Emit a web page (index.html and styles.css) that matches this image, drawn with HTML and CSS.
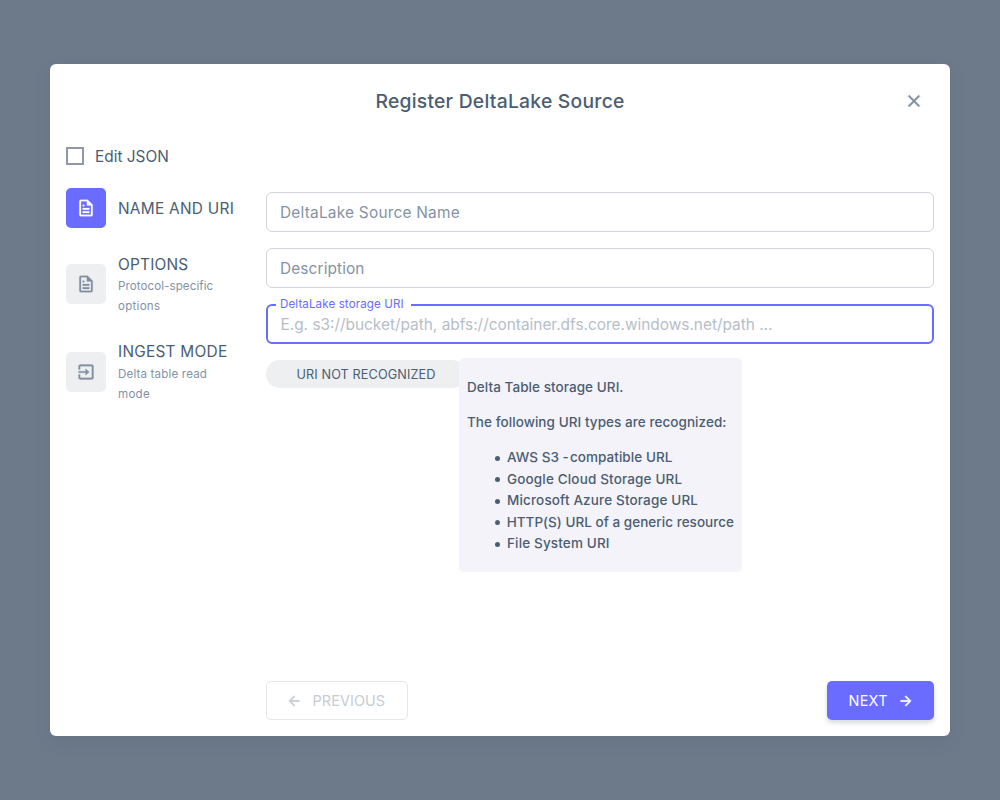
FILE: index.html
```
<!DOCTYPE html>
<html lang="en">
<head>
<meta charset="utf-8">
<title>Register DeltaLake Source</title>
<link rel="stylesheet" href="styles.css">
</head>
<body>
<div class="dialog" role="dialog">
  <header class="header">
    <h1 class="title">Register DeltaLake Source</h1>
    <svg class="close" viewBox="0 0 24 24"><path d="M19 6.41 17.59 5 12 10.59 6.41 5 5 6.41 10.59 12 5 17.59 6.41 19 12 13.41 17.59 19 19 17.59 13.41 12z"/></svg>
  </header>
  <label class="json"><span class="checkbox"></span><span class="json-label">Edit JSON</span></label>
  <div class="content">
    <nav class="steps">
      <div class="step active">
        <span class="tile"><svg viewBox="0 0 24 24"><path d="M6 2a2 2 0 0 0-2 2v16a2 2 0 0 0 2 2h12a2 2 0 0 0 2-2V8l-6-6H6m0 2h7v5h5v11H6V4m2 4v2h2V8H8m0 4v2h8v-2H8m0 4v2h8v-2H8z"/></svg></span>
        <div class="step-text"><div class="step-title t-name">NAME AND URI</div></div>
      </div>
      <div class="step">
        <span class="tile"><svg viewBox="0 0 24 24"><path d="M6 2a2 2 0 0 0-2 2v16a2 2 0 0 0 2 2h12a2 2 0 0 0 2-2V8l-6-6H6m0 2h7v5h5v11H6V4m2 4v2h2V8H8m0 4v2h8v-2H8m0 4v2h8v-2H8z"/></svg></span>
        <div class="step-text"><div class="step-title t-options">OPTIONS</div><div class="step-sub"><span class="s-protocol">Protocol-specific</span><br>options</div></div>
      </div>
      <div class="step">
        <span class="tile"><svg viewBox="0 0 24 24"><path d="M19 3H5a2 2 0 0 0-2 2v4h2V5h14v14H5v-4H3v4a2 2 0 0 0 2 2h14a2 2 0 0 0 2-2V5a2 2 0 0 0-2-2m-7.500 5v3H3v2h8.500v3l4.500-4z"/></svg></span>
        <div class="step-text"><div class="step-title t-ingest">INGEST MODE</div><div class="step-sub"><span class="s-delta">Delta table read</span><br>mode</div></div>
      </div>
    </nav>
    <main class="form">
      <div class="field"><span class="f-name">DeltaLake Source Name</span></div>
      <div class="field"><span class="f-desc">Description</span></div>
      <div class="field focused"><span class="float">DeltaLake storage URI</span><span class="f-uri">E.g. s3://bucket/path, abfs://container.dfs.core.windows.net/path ...</span></div>
      <div class="chip-row">
        <div class="chip"><span>URI NOT RECOGNIZED</span></div>
        <div class="tooltip">
          <p class="p1">Delta Table storage URI.</p>
          <p class="p2">The following URI types are recognized:</p>
          <ul>
            <li class="l1"><span>AWS S3<span class="dash"> -</span>compatible URL</span></li>
            <li class="l2"><span>Google Cloud Storage URL</span></li>
            <li class="l3"><span>Microsoft Azure Storage URL</span></li>
            <li class="l4"><span>HTTP(S) URL of a generic resource</span></li>
            <li class="l5"><span>File System URI</span></li>
          </ul>
        </div>
      </div>
      <footer class="actions">
        <button class="btn prev" disabled><svg viewBox="0 0 24 24"><path d="M20 11v2H8l5.500 5.500-1.420 1.420L4.160 12l7.920-7.920L13.500 5.500 8 11h12z"/></svg><span>PREVIOUS</span></button>
        <button class="btn next"><span>NEXT</span><svg viewBox="0 0 24 24"><path d="M4 11v2h12l-5.500 5.500 1.420 1.420L19.840 12l-7.920-7.920L10.500 5.500 16 11H4z"/></svg></button>
      </footer>
    </main>
  </div>
</div>
</body>
</html>
```
FILE: styles.css
```
* { box-sizing: border-box; }
body {
  margin: 0;
  height: 800px;
  display: flex;
  align-items: center;
  justify-content: center;
  background: #6d7a8a;
  color: #4b5d72;
  font: 15.400px/24px Inter, "Liberation Sans", sans-serif;
  white-space: nowrap;
}
svg { fill: currentColor; display: block; flex: none; }
.dialog {
  width: 900px;
  height: 672px;
  padding: 16px;
  display: flex;
  flex-direction: column;
  background: #fff;
  border-radius: 6px;
  box-shadow: 0 6px 16px rgba(50, 71, 92, .12);
}
.header {
  display: grid;
  grid-template-columns: 46px 1fr 46px;
  align-items: center;
  height: 40px;
}
.title {
  grid-column: 2;
  margin: 0;
  padding-top: 1px;
  text-align: center;
  font-size: 19.300px;
  font-weight: 500;
  line-height: 32px;
  letter-spacing: .25px;
}
.close {
  width: 20px;
  height: 20px;
  margin: 1px 0 0 16px;
  color: #8592a3;
  stroke: currentColor;
  stroke-width: .8px;
}
.json {
  display: flex;
  align-items: center;
  gap: 11px;
  height: 24px;
  margin-top: 24px;
}
.json-label { padding-top: 1px; }
.checkbox { width: 18px; height: 18px; border: 2px solid #8d99a9; }
.content { display: flex; flex: 1; margin-top: 20px; }
.steps { width: 200px; }
.step { display: flex; align-items: center; gap: 12px; height: 64px; margin-bottom: 24px; }
.step.active { height: 40px; margin-bottom: 24px; }
.active .step-text { padding-top: 1px; }
.t-name { letter-spacing: .27px; }
.t-options { letter-spacing: .2px; padding-top: 1px; margin-bottom: -1px; }
.t-ingest { letter-spacing: .25px; }
.tile {
  width: 40px;
  height: 40px;
  display: flex;
  align-items: center;
  justify-content: center;
  border-radius: 5px;
  background: #eeeff1;
  color: #8090a2;
}
.tile svg { width: 20px; height: 20px; stroke: currentColor; stroke-width: .3px; }
.active .tile { background: #696cff; color: #fff; }
.step-sub { font-size: 11.600px; line-height: 20px; color: #8592a3; letter-spacing: .25px; }
.s-protocol { letter-spacing: .07px; }
.s-delta { letter-spacing: .15px; }
.form { flex: 1; display: flex; flex-direction: column; gap: 16px; padding-top: 4px; }
.field {
  position: relative;
  height: 40px;
  display: flex;
  align-items: center;
  padding: 2px 0 0 13px;
  border: 1px solid #d1d4db;
  border-radius: 6px;
  color: #8592a3;
}
.f-name { letter-spacing: .23px; }
.f-desc { letter-spacing: .12px; }
.focused { border: 2px solid #696cff; color: #b6bec8; padding-left: 12.500px; }
.float {
  position: absolute;
  left: 8px;
  top: -12px;
  padding: 0 7px 0 4px;
  background: #fff;
  color: #696cff;
  font-size: 11.600px;
  line-height: 20px;
  letter-spacing: .1px;
}
.chip-row { display: flex; height: 214px; margin-top: -2px; }
.chip {
  width: 200px;
  height: 28px;
  margin: 2px -7px 0 0;
  padding-top: 1px;
  display: flex;
  align-items: center;
  justify-content: center;
  border-radius: 14px;
  background: #eeeff1;
  font-size: 12.700px;
  letter-spacing: .1px;
}
.tooltip {
  position: relative;
  width: 283px;
  padding: 19px 8px;
  border-radius: 5px;
  background: #f4f3f9;
  font-size: 13.500px;
  font-weight: 500;
  line-height: 21.500px;
  letter-spacing: .06px;
}
.tooltip p { margin: 0 0 13.500px; }
.tooltip ul { margin: 0; padding-left: 28px; list-style: none; }
.tooltip li { display: flex; align-items: center; gap: 7px; }
.tooltip li::before {
  content: "";
  width: 5px;
  height: 5px;
  margin-top: 1px;
  border-radius: 50%;
  background: currentColor;
}
.dash { letter-spacing: -.3px; margin-right: 1.500px; }
.l2, .l3, .l5 { letter-spacing: .15px; }
.l4 { letter-spacing: .03px; }
.actions { display: flex; justify-content: space-between; margin-top: auto; }
.btn {
  height: 39px;
  display: flex;
  align-items: center;
  font: 14.400px/24px Inter, sans-serif;
  border-radius: 5px;
}
.btn svg { width: 16px; height: 16px; stroke: currentColor; stroke-width: .8px; }
.prev { width: 142px; padding: 0 0 0 19px; gap: 10.500px; border: 1px solid #e4e6e9; background: #fff; color: #c6ccd3; letter-spacing: .1px; }
.next { width: 107px; padding: 0 0 0 21.500px; gap: 10.500px; border: 0; background: #696cff; color: #fff; letter-spacing: .3px; box-shadow: 0 3px 5px rgba(50, 71, 92, .2); }
```
